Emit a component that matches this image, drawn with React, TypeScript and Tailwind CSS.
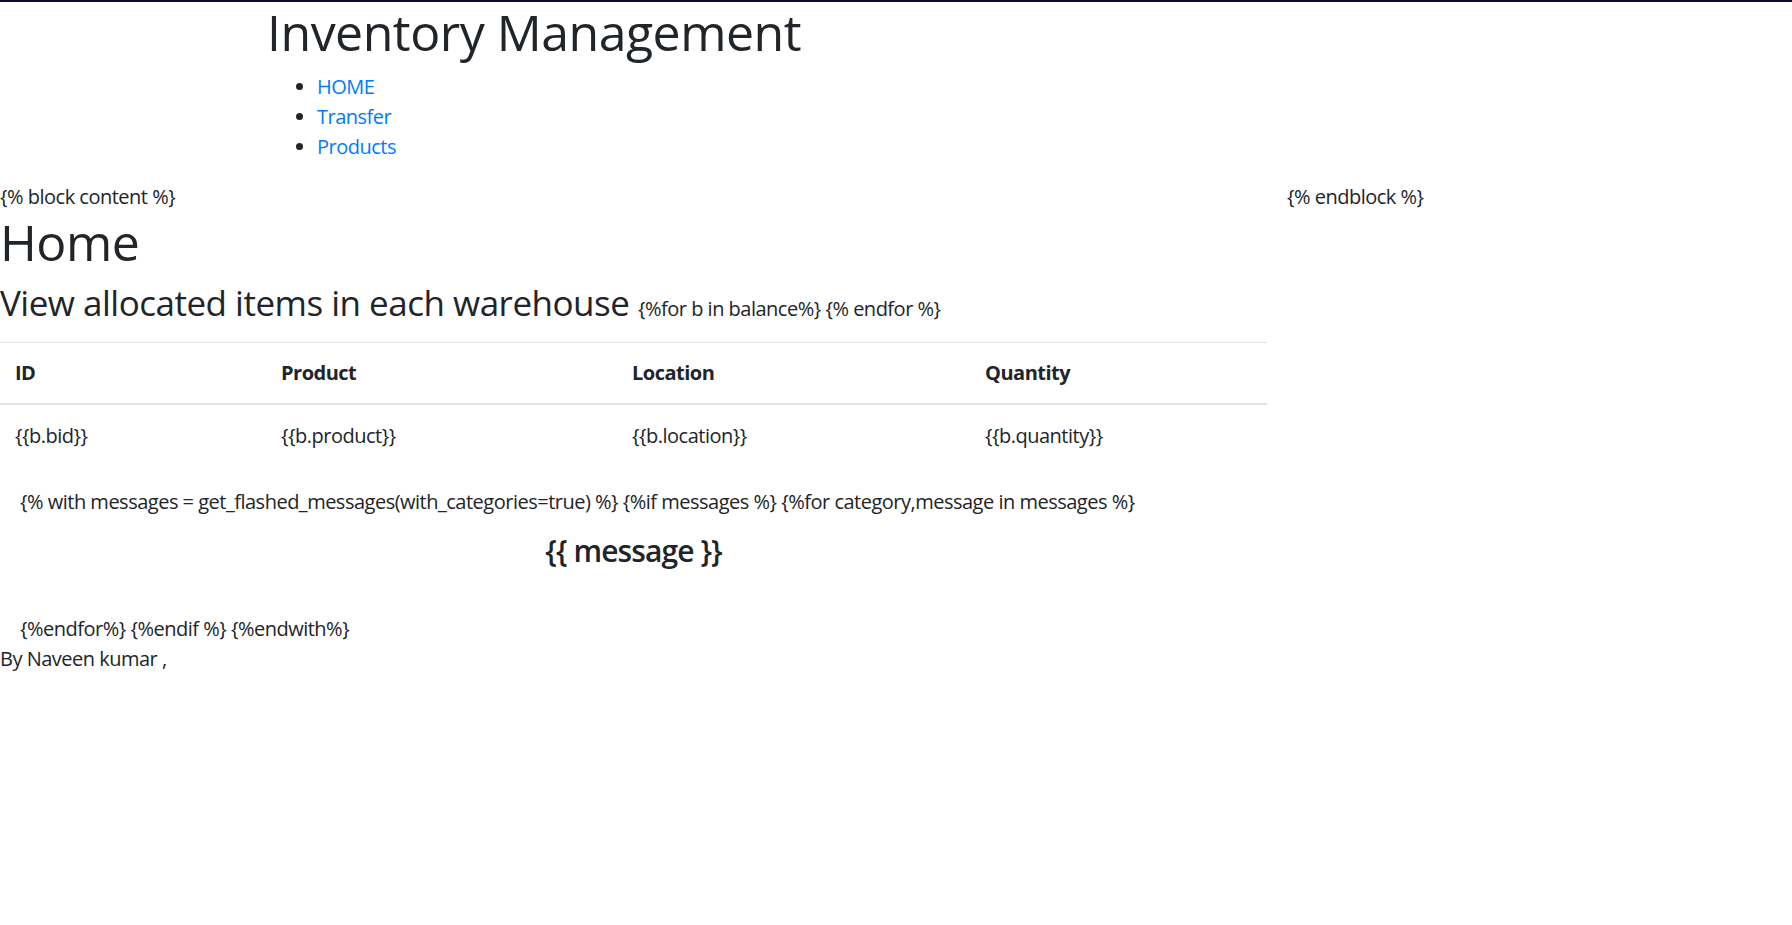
import React from 'react';

export default function App() {
    const navLinks = [
        { id: 'home', label: 'HOME' },
        { id: 'transfer', label: 'Transfer' },
        { id: 'products', label: 'Products' }
    ];

    const columns = [
        { key: 'id', title: 'ID', cell: '{{b.bid}}', width: 'w-[266px]' },
        { key: 'product', title: 'Product', cell: '{{b.product}}', width: 'w-[351px]' },
        { key: 'location', title: 'Location', cell: '{{b.location}}', width: 'w-[353px]' },
        { key: 'quantity', title: 'Quantity', cell: '{{b.quantity}}', width: 'w-[297px]' }
    ];

    return (
        <div className="min-h-screen bg-white text-[#212529] text-[20px] leading-[30px] tracking-[-0.5px] font-['Open_Sans',sans-serif]">
            <div className="h-[2px] bg-[#0c0a2e]" />

            {/* Cabecera */}
            <header className="pl-[267px]">
                <h1 className="text-[50px] leading-[60px] font-normal tracking-[-0.5px] mb-[10px]">Inventory Management</h1>
                <ul className="list-disc pl-[50px] mb-[20px]">
                    {navLinks.map((link) => (
                        <li key={link.id}>
                            <a href="#" className="text-[#007bff]">{link.label}</a>
                        </li>
                    ))}
                </ul>
            </header>

            <div className="flex">
                <main className="w-[1267px]">
                    <p>{'{% block content %}'}</p>
                    <h1 className="text-[50px] leading-[60px] font-normal tracking-[-0.5px] mb-[10px]">Home</h1>
                    <h3 className="text-[35px] leading-[42px] font-normal tracking-[-0.5px] mb-[12px]">
                        View allocated items in each warehouse{' '}
                        <span className="text-[20px]">{'{%for b in balance%} {% endfor %}'}</span>
                    </h3>

                    {/* Tabla */}
                    <table className="w-full mb-[20px] border-collapse">
                        <thead>
                            <tr className="border-t border-[#dee2e6] border-b-2">
                                {columns.map((col) => (
                                    <th key={col.key} className={`${col.width} text-left font-bold px-[15px] py-[15px]`}>
                                        {col.title}
                                    </th>
                                ))}
                            </tr>
                        </thead>
                        <tbody>
                            <tr>
                                {columns.map((col) => (
                                    <td key={col.key} className="px-[15px] py-[16px]">{col.cell}</td>
                                ))}
                            </tr>
                        </tbody>
                    </table>

                    {/* Mensajes */}
                    <div className="px-[20px]">
                        <p>
                            {'{% with messages = get_flashed_messages(with_categories=true) %} {%if messages %} {%for category,message in messages %}'}
                        </p>
                        <h4 className="text-center text-[30px] leading-[36px] font-semibold tracking-[-0.9px] mt-[16px] mb-[45px]">
                            {'{{ message }}'}
                        </h4>
                        <p>{'{%endfor%} {%endif %} {%endwith%}'}</p>
                    </div>
                </main>
                <p className="ml-[20px]">{'{% endblock %}'}</p>
            </div>

            <footer>By Naveen kumar ,</footer>
        </div>
    );
}
